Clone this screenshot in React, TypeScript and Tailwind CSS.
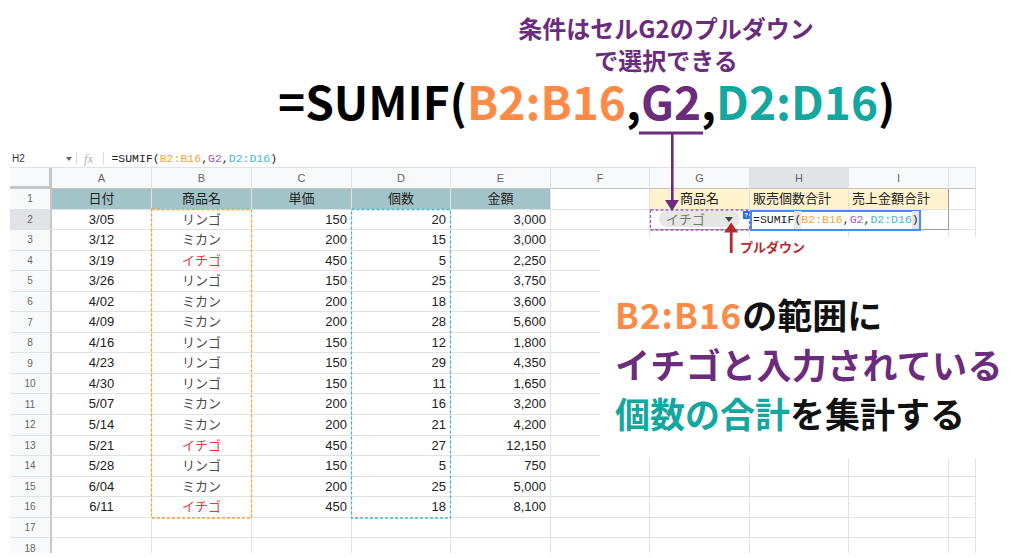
import React from "react";

const COLS = [
  { key: "A", w: "w-[100px]" },
  { key: "B", w: "w-[100px]" },
  { key: "C", w: "w-[100px]" },
  { key: "D", w: "w-[99px]" },
  { key: "E", w: "w-[100px]" },
  { key: "F", w: "w-[99px]" },
  { key: "G", w: "w-[100px]" },
  { key: "H", w: "w-[99px]" },
  { key: "I", w: "w-[100px]" },
  { key: "", w: "w-[27px]" },
];

const HEAD = ["日付", "商品名", "単価", "個数", "金額"];

const DATA: [string, string, string, string, string][] = [
  ["3/05", "リンゴ", "150", "20", "3,000"],
  ["3/12", "ミカン", "200", "15", "3,000"],
  ["3/19", "イチゴ", "450", "5", "2,250"],
  ["3/26", "リンゴ", "150", "25", "3,750"],
  ["4/02", "ミカン", "200", "18", "3,600"],
  ["4/09", "ミカン", "200", "28", "5,600"],
  ["4/16", "リンゴ", "150", "12", "1,800"],
  ["4/23", "リンゴ", "150", "29", "4,350"],
  ["4/30", "リンゴ", "150", "11", "1,650"],
  ["5/07", "ミカン", "200", "16", "3,200"],
  ["5/14", "ミカン", "200", "21", "4,200"],
  ["5/21", "イチゴ", "450", "27", "12,150"],
  ["5/28", "リンゴ", "150", "5", "750"],
  ["6/04", "ミカン", "200", "25", "5,000"],
  ["6/11", "イチゴ", "450", "18", "8,100"],
];

const Formula = () => (
  <>
    =SUMIF<span className="bg-[#e6e6e6]">(</span>
    <span className="text-[#f5a53f]">B2:B16</span>,
    <span className="text-[#a35ab8]">G2</span>,
    <span className="text-[#46b4d8]">D2:D16</span>
    <span className="bg-[#e6e6e6]">)</span>
  </>
);

const Title = () => (
  <div className="h-[150px] flex flex-col font-['Noto_Sans_CJK_JP',sans-serif] font-bold whitespace-nowrap">
    <div className="ml-[466px] w-[400px] pt-[12px] text-center text-[24px] leading-[32px] text-[#6b2c7e]">
      <div>条件はセルG2のプルダウン</div>
      <div>で選択できる</div>
    </div>
    <div className="pl-[278px] text-[46px] leading-[48px] text-black">
      =SUMIF(<span className="text-[#fd8b47]">B2:B16</span>,
      <span className="text-[#6b2c7e]">G2</span>,
      <span className="text-[#14a7a0]">D2:D16</span>)
    </div>
  </div>
);

const FormulaBar = () => (
  <div className="ml-[10px] h-[17px] flex items-center text-[#333]">
    <span className="w-[54px] pl-[2px] text-[10px]">H2</span>
    <span className="w-[10px] flex justify-center">
      <span className="w-0 h-0 border-l-[3px] border-r-[3px] border-t-[4px] border-l-transparent border-r-transparent border-t-[#666]" />
    </span>
    <span className="ml-[2px] w-px h-[13px] bg-[#dadce0]" />
    <span className="ml-[7px] font-['Liberation_Serif',serif] italic text-[13px] text-[#b5b5b5]">fx</span>
    <span className="ml-[10px] w-px h-[13px] bg-[#dadce0]" />
    <span className="ml-[7px] font-['Liberation_Mono',monospace] text-[11.5px] text-[#222]">
      =SUMIF(<span className="text-[#f5a53f]">B2:B16</span>,
      <span className="text-[#a35ab8]">G2</span>,
      <span className="text-[#46b4d8]">D2:D16</span>)
    </span>
  </div>
);

function Cell({ r, c, w }: { r: number; c: number; w: string }) {
  let bg = "";
  let align = "justify-end pr-[4px]";
  let content: React.ReactNode = null;

  if (r === 1) {
    if (c <= 4) {
      bg = "bg-[#a2c4c9]";
      align = "justify-center";
      content = HEAD[c];
    } else if (c === 6) {
      bg = "bg-[#fff2cc]";
      align = "justify-center";
      content = "商品名";
    } else if (c === 7) {
      bg = "bg-[#fff2cc]";
      align = "justify-start pl-[3px]";
      content = "販売個数合計";
    } else if (c === 8) {
      bg = "bg-[#fff2cc]";
      align = "justify-start pl-[3px]";
      content = "売上金額合計";
    }
  } else if (r >= 2 && r <= 16 && c <= 4) {
    const d = DATA[r - 2];
    if (c === 0) {
      align = "justify-center";
      content = d[0];
    } else if (c === 1) {
      align = "justify-center";
      content = (
        <span className={d[1] === "イチゴ" ? "text-[#e23b3f]" : "text-[#4a4a4a]"}>{d[1]}</span>
      );
    } else {
      content = d[c];
    }
  }

  if (r === 2 && c === 6) {
    align = "justify-start";
    content = (
      <div className="ml-[9px] w-[81px] h-[16px] rounded-full bg-[#e6e6e6] flex items-center justify-between pl-[7px] pr-[7px] text-[#777]">
        <span>イチゴ</span>
        <span className="w-0 h-0 border-l-[4px] border-r-[4px] border-t-[5px] border-l-transparent border-r-transparent border-t-[#444]" />
      </div>
    );
  }

  if (r === 2 && c === 7) {
    align = "justify-start";
    content = (
      <>
        <div className="absolute left-[-7px] top-[1px] w-[6px] h-[8px] bg-[#1a73e8] text-white text-[6px] leading-[8px] text-center font-bold">
          ?
        </div>
        <div className="absolute left-0 top-0 z-10 w-[171px] h-[21px] border-2 border-[#4a8af4] bg-white flex items-center pl-px font-['Liberation_Mono',monospace] text-[11.5px] text-[#222] whitespace-nowrap">
          <Formula />
        </div>
      </>
    );
  }

  const rightB = c === 8 && r <= 2 ? "border-r-[#9e9e9e]" : "border-r-[#e2e2e2]";
  const bottomB = r === 2 && c >= 6 && c <= 8 ? "border-b-[#9e9e9e]" : "border-b-[#e2e2e2]";

  return (
    <div className={`${w} ${bg} ${align} ${rightB} ${bottomB} relative shrink-0 border-r border-b flex items-center whitespace-nowrap`}>
      {content}
    </div>
  );
}

function Row({ n }: { n: number }) {
  return (
    <div className="flex h-[20.56px]">
      <div
        className={`w-[42px] shrink-0 border-r-2 border-b border-r-[#c8c8c8] border-b-[#e2e2e2] flex items-center justify-center text-[10px] text-[#666] ${
          n === 2 ? "bg-[#e1e3e6]" : "bg-[#f8f9fa]"
        }`}
      >
        {n}
      </div>
      {COLS.map((col, i) => (
        <Cell key={i} r={n} c={i} w={col.w} />
      ))}
    </div>
  );
}

const Sheet = () => (
  <div className="flex flex-col">
    <FormulaBar />
    <div className="ml-[10px] w-[966px] h-[386px] overflow-hidden border-t border-[#e2e2e2] text-[13px] text-[#222]">
      <div className="flex h-[21px]">
        <div className="w-[42px] shrink-0 bg-[#f8f9fa] border-r-[3px] border-b-[3px] border-[#c4c7c5]" />
        {COLS.map((col, i) => (
          <div
            key={i}
            className={`${col.w} ${
              col.key === "H" ? "bg-[#e1e3e6]" : "bg-[#f8f9fa]"
            } shrink-0 border-r border-b border-r-[#e2e2e2] border-b-[#c4c4c4] flex items-center justify-center text-[11px] text-[#666]`}
          >
            {col.key}
          </div>
        ))}
      </div>
      {Array.from({ length: 18 }, (_, i) => (
        <Row key={i} n={i + 1} />
      ))}
    </div>
  </div>
);

const Callout = () => (
  <div className="absolute left-[600px] top-[237px] w-[424px] h-[221px] bg-white">
    <div className="pl-[15px] pt-[52px] font-['Noto_Sans_CJK_JP',sans-serif] font-bold text-[35px] leading-[49.5px] whitespace-nowrap text-[#111]">
      <div>
        <span className="text-[#fd8b47] tracking-[0.03em]">B2:B16</span>の範囲に
      </div>
      <div className="text-[#6b2c7e] tracking-[0.01em]">イチゴと入力されている</div>
      <div>
        <span className="text-[#14a7a0]">個数の合計</span>を集計する
      </div>
    </div>
  </div>
);

const Marks = () => (
  <>
    <svg className="absolute left-0 top-0 pointer-events-none" width="1024" height="558" viewBox="0 0 1024 558">
      <rect x="151.5" y="209.5" width="100" height="308.5" fill="none" stroke="#f7a13a" strokeWidth="1.3" strokeDasharray="3 2" />
      <rect x="351.5" y="209.5" width="99" height="308.5" fill="none" stroke="#45b5d6" strokeWidth="1.3" strokeDasharray="3 2" />
      <rect x="650.5" y="210" width="99" height="20" fill="none" stroke="#a35ab8" strokeWidth="1.3" strokeDasharray="3 2" />
      <rect x="639" y="131.5" width="64" height="3" fill="#6b2c7e" />
      <rect x="671" y="133" width="2.6" height="70" fill="#6b2c7e" />
      <polygon points="665,200 679,200 672,211" fill="#6b2c7e" />
      <rect x="729.8" y="230" width="2.8" height="23" fill="#b5282e" />
      <polygon points="724,232.5 738,232.5 731.2,222.5" fill="#b5282e" />
    </svg>
    <span className="absolute left-[740px] top-[239px] font-['Noto_Sans_CJK_JP',sans-serif] font-bold text-[13px] leading-[16px] text-[#b5282e] whitespace-nowrap">
      プルダウン
    </span>
  </>
);

export default function App() {
  return (
    <div className="relative w-[1024px] h-[558px] overflow-hidden bg-white font-['Liberation_Sans','Noto_Sans_CJK_JP',sans-serif]">
      <Title />
      <Sheet />
      <Callout />
      <Marks />
    </div>
  );
}
